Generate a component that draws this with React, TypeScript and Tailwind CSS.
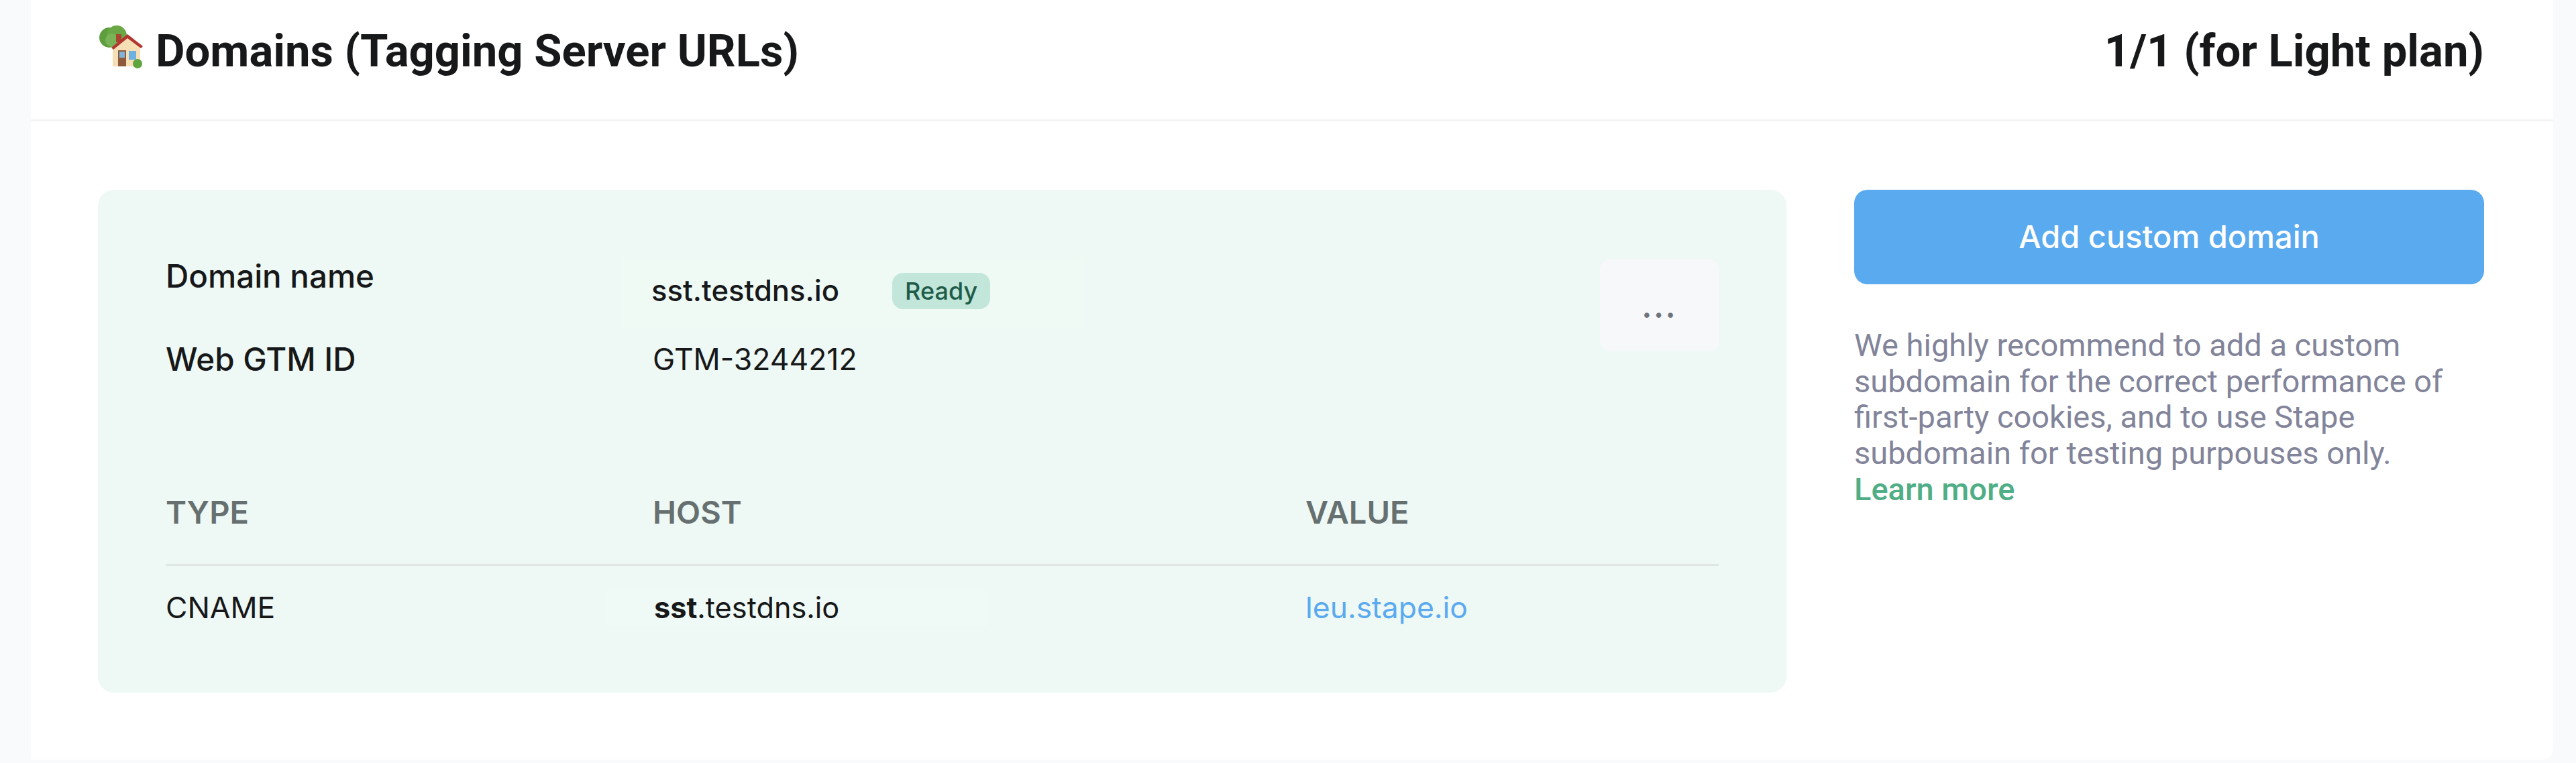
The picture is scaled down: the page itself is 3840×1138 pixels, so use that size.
import React from "react";

function HouseEmoji() {
  return (
    <svg viewBox="0 0 66 66" className="w-[66px] h-[66px] shrink-0">
      <circle cx="16" cy="18" r="15" fill="#5f9e3e" />
      <circle cx="27" cy="15" r="15" fill="#6aa846" />
      <circle cx="20" cy="22" r="10" fill="#7ab356" />
      <rect x="26" y="13" width="8" height="12" fill="#a9452f" />
      <path d="M21 33 L21 61 L62 61 L62 31 L43 15 Z" fill="#f6dfb4" />
      <path d="M19 33 L43 13 L66 31 L63 34 L43 19 L22 36 Z" fill="#b3352f" />
      <rect x="29" y="37" width="12" height="24" fill="#8d5a3b" />
      <rect x="31" y="39" width="8" height="9" fill="#7fb5dc" />
      <rect x="45" y="38" width="11" height="13" fill="#6fb0e2" />
      <circle cx="58" cy="57" r="7" fill="#5fa53f" />
    </svg>
  );
}

export default function App() {
  return (
    <div className="w-[3840px] h-[1138px] overflow-hidden bg-[#f8fafc] pl-[46px] pr-[34px] font-['Roboto',sans-serif]">
      <div className="bg-white h-[1133px] rounded-br-[16px]">
        <header className="h-[181px] border-b-[3px] border-[#f4f5f6] pl-[101px] pr-[103px] flex justify-between items-start pt-[38px]">
          <div className="flex items-start">
            <HouseEmoji />
            <h1 className="ml-[19px] text-[67px] leading-[76px] font-bold text-[#17181a] whitespace-nowrap">
              Domains (Tagging Server URLs)
            </h1>
          </div>
          <div className="text-[67px] leading-[76px] font-bold text-[#17181a] whitespace-nowrap">
            1/1 (for Light plan)
          </div>
        </header>
        <div className="flex pl-[100px] pt-[102px]">
          <section className="w-[2517px] h-[750px] bg-[#eef8f4] rounded-[24px] px-[101px] font-['Inter',sans-serif] text-[#17181a]">
            <div className="h-[429px] relative">
              <div className="flex items-start pt-[101px]">
                <div className="w-[726px] text-[47.5px] font-medium leading-[56px]">Domain name</div>
                <div className="flex items-center h-[107px] -ml-[46px] pl-[44px] pr-[140px] bg-[#effaf5]">
                  <span className="text-[43.6px] font-medium leading-[54px] -mt-[8px]">sst.testdns.io</span>
                  <span className="ml-[79px] w-[146px] h-[54px] -mt-[8px] rounded-[16px] bg-[#c2e6da] text-[#1f5c48] text-[36px] font-medium flex items-center justify-center">
                    Ready
                  </span>
                </div>
                <button className="absolute left-[2138px] top-[103px] w-[178px] h-[138px] rounded-[16px] bg-[#f6f8fa] text-[#6f747c] text-[44px] font-bold leading-none tracking-[3px] pt-[6px]">
                  ...
                </button>
              </div>
              <div className="flex items-start mt-[17px]">
                <div className="w-[726px] text-[47.5px] font-medium leading-[56px]">Web GTM ID</div>
                <div className="text-[44.5px] leading-[56px]">GTM-3244212</div>
              </div>
            </div>
            <div className="flex h-[132px] border-b-[3px] border-[#dfe6e4] text-[47px] leading-[56px] font-semibold text-[#667070] pt-[24px]">
              <div className="w-[726px]">TYPE</div>
              <div className="w-[973px]">HOST</div>
              <div>VALUE</div>
            </div>
            <div className="flex text-[44.4px] leading-[56px] pt-[34px]">
              <div className="w-[726px]">CNAME</div>
              <div className="w-[973px]">
                <span className="inline-block -ml-[70px] pl-[72px] pr-[220px] bg-[#eff9f5] text-[43.3px]">
                  <span className="font-bold">sst</span>.testdns.io
                </span>
              </div>
              <a className="text-[#5aaaf0]">leu.stape.io</a>
            </div>
          </section>
          <aside className="ml-[101px] w-[939px]">
            <button className="w-full h-[141px] rounded-[20px] bg-[#5aaaf0] text-white text-[47px] font-medium font-['Inter',sans-serif]">
              Add custom domain
            </button>
            <p className="mt-[64px] text-[47px] leading-[53.7px] text-[#82849a]">
              We highly recommend to add a custom subdomain for the correct performance of first-party cookies, and to use Stape subdomain for testing purpouses only.{" "}
              <a className="block text-[#4fae85] font-medium">Learn more</a>
            </p>
          </aside>
        </div>
      </div>
    </div>
  );
}
